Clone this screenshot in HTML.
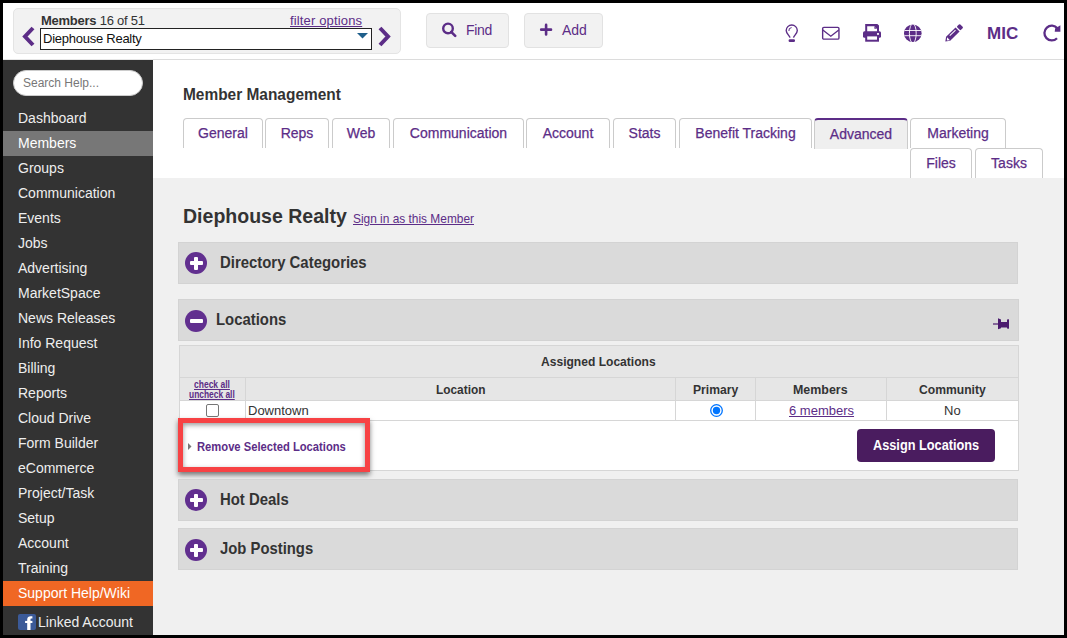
<!DOCTYPE html>
<html><head><meta charset="utf-8">
<style>
*{box-sizing:border-box;margin:0;padding:0}
html,body{width:1067px;height:638px;overflow:hidden;background:#000;font-family:"Liberation Sans",sans-serif}
.a{position:absolute}
#frame{position:absolute;left:3px;top:3px;width:1061px;height:632px;background:#fff;overflow:hidden}
.p{color:#5c2d87}
.t{white-space:nowrap;line-height:1}
.tab{position:absolute;top:118px;height:30px;border:1px solid #cbcbcb;border-bottom:none;border-radius:4px 4px 0 0;background:#fff;color:#5c2d87;font-size:14px;line-height:1;white-space:nowrap;text-align:center;padding-top:7px;-webkit-text-stroke:0.25px #5c2d87}
.tab.act{background:#efefef;border-top:2px solid #5c2d87;padding-top:7px;height:31px}
.panel{position:absolute;left:178px;width:841px;height:42px;background:#dadada;border:1px solid #d3d3d3}
.circ{position:absolute;left:185px;width:22px;height:22px;border-radius:50%;background:#612f8f}
.circ .h{position:absolute;left:4.5px;top:9px;width:13px;height:4px;background:#fff;border-radius:1px}
.circ .v{position:absolute;left:9px;top:4.5px;width:4px;height:13px;background:#fff;border-radius:1px}
.ptitle{position:absolute;left:220px;transform-origin:0 0;font-size:17px;font-weight:bold;color:#333;white-space:nowrap;line-height:1}
.th{font-size:13px;font-weight:bold;color:#333;transform-origin:0 0}
</style></head><body>
<div id="frame"></div>

<!-- header -->
<div class="a" style="left:153px;top:59px;width:911px;height:1px;background:#dcdcdc"></div>
<div class="a" style="left:3px;top:59px;width:150px;height:1px;background:#e6e6e6"></div>
<div class="a" style="left:13px;top:8px;width:388px;height:46px;background:#f2f2f2;border:1px solid #e4e4e4;border-radius:5px"></div>
<div class="a t" style="left:41px;top:14px;font-size:13px;color:#333;letter-spacing:-0.25px"><b>Members</b> 16 of 51</div>
<div class="a t p" style="left:290px;top:14px;font-size:13px;letter-spacing:0.15px;text-decoration:underline">filter options</div>
<div class="a" style="left:40px;top:28px;width:332px;height:22px;background:#fff;border:1px solid #222"></div>
<div class="a t" style="left:43px;top:32px;font-size:13px;color:#111;letter-spacing:-0.25px">Diephouse Realty</div>
<svg class="a" style="left:357px;top:33px" width="11" height="6" viewBox="0 0 11 6"><path d="M0 0H11L5.5 5.5Z" fill="#1f5f8b"/></svg>
<svg class="a" style="left:21px;top:26px" width="15" height="21" viewBox="0 0 15 21"><path d="M12 2L4 10.5L12 19" stroke="#5c2d87" stroke-width="4" fill="none"/></svg>
<svg class="a" style="left:377px;top:26px" width="15" height="21" viewBox="0 0 15 21"><path d="M3 2L11 10.5L3 19" stroke="#5c2d87" stroke-width="4" fill="none"/></svg>

<div class="a" style="left:426px;top:13px;width:83px;height:35px;background:#f2f2f2;border:1px solid #e2e2e2;border-radius:4px"></div>
<svg class="a" style="left:441px;top:22px" width="16" height="16" viewBox="0 0 16 16"><circle cx="7" cy="6.4" r="4.8" stroke="#5c2d87" stroke-width="2.4" fill="none"/><path d="M10.2 9.8L14.2 13.8" stroke="#5c2d87" stroke-width="2.6" stroke-linecap="round"/></svg>
<div class="a t p" style="left:466px;top:23px;font-size:14px;letter-spacing:-0.3px">Find</div>
<div class="a" style="left:524px;top:13px;width:79px;height:35px;background:#f2f2f2;border:1px solid #e2e2e2;border-radius:4px"></div>
<svg class="a" style="left:539px;top:23px" width="14" height="14" viewBox="0 0 14 14"><path d="M7.1 1.9V11.4M2.2 6.65H12" stroke="#5c2d87" stroke-width="2.6" stroke-linecap="round"/></svg>
<div class="a t p" style="left:562px;top:23px;font-size:14px">Add</div>

<!-- right icons -->
<svg class="a" style="left:784px;top:23px" width="16" height="20" viewBox="0 0 16 20"><path d="M6 14.7C5.6 12.4 2.2 10.6 2.2 7.55A5.55 5.55 0 0 1 13.3 7.55C13.3 10.6 9.9 12.4 9.5 14.7" stroke="#5c2d87" stroke-width="1.4" fill="none"/><rect x="4.6" y="16.2" width="6.4" height="2.8" rx="1.2" fill="#5c2d87"/><path d="M4.9 8A3 3 0 0 1 7.6 4.6" stroke="#5c2d87" stroke-width="1" fill="none"/></svg>
<svg class="a" style="left:821px;top:26px" width="20" height="15" viewBox="0 0 20 15"><rect x="1.65" y="1.35" width="16.3" height="11.8" rx="1.2" stroke="#5c2d87" stroke-width="1.4" fill="none"/><path d="M1.8 4L9.8 10.2L17.8 4" stroke="#5c2d87" stroke-width="1.4" fill="none"/></svg>
<svg class="a" style="left:863px;top:24px" width="18" height="18" viewBox="0 0 18 18"><path d="M2.2 0H14.4L16 1.6V8H2.2Z" fill="#5c2d87"/><path d="M4.2 2.2H11.4L14 4.8V8H4.2Z" fill="#fff"/><path d="M11.4 2.2V4.8H14" fill="#5c2d87"/><rect x="0" y="7.2" width="18" height="6.5" rx="1.5" fill="#5c2d87"/><rect x="2.2" y="11.5" width="13.8" height="6.2" fill="#5c2d87"/><rect x="4.2" y="12.4" width="9.8" height="3.3" fill="#fff"/><rect x="14" y="9.1" width="2" height="1.7" fill="#fff"/></svg>
<svg class="a" style="left:903px;top:24px" width="19" height="19" viewBox="0 0 19 19"><defs><clipPath id="gc"><circle cx="9.8" cy="9.3" r="8.8"/></clipPath></defs><circle cx="9.8" cy="9.3" r="8.8" fill="#5c2d87"/><g clip-path="url(#gc)" stroke="#fff" stroke-width="0.9" fill="none"><path d="M0 6.5H19M0 11.7H19"/><ellipse cx="9.8" cy="9.3" rx="3.4" ry="9.6"/></g></svg>
<svg class="a" style="left:943px;top:21px" width="23" height="23" viewBox="0 0 23 23"><g transform="translate(2.3 20.6) rotate(-44.5)"><path d="M0 0L4 -2.9H17.2V2.9H4Z" fill="#5c2d87"/><rect x="7.3" y="-1.6" width="8.1" height="1" fill="#fff"/><path d="M1.9 0.3L4.3 -1.8V2.2Z" fill="#fff"/><rect x="18.5" y="-2.65" width="4.2" height="5.3" rx="1" fill="#5c2d87"/></g></svg>
<div class="a t p" style="left:987px;top:25px;font-size:17px;font-weight:bold;letter-spacing:0">MIC</div>
<svg class="a" style="left:1042px;top:24px" width="20" height="19" viewBox="0 0 20 19"><path d="M15.4 4.3A7.35 7.35 0 1 0 15 14.2" stroke="#5c2d87" stroke-width="2.3" fill="none"/><path d="M13.1 4.6L18.4 1.3V7.8H12.7Z" fill="#5c2d87"/></svg>

<!-- sidebar -->
<div class="a" style="left:3px;top:60px;width:150px;height:575px;background:#333"></div>
<div class="a" style="left:13px;top:70px;width:130px;height:26px;background:#fff;border:1px solid #ccc;border-radius:13px"></div>
<div class="a t" style="left:23px;top:77px;font-size:12px;color:#777">Search Help...</div>
<div class="a" style="left:3px;top:131px;width:150px;height:25px;background:#777"></div>
<div class="a" style="left:3px;top:581px;width:150px;height:25px;background:#f06724"></div>
<div id="nav" class="a" style="left:18px;top:106px;font-size:14px;color:#eee;line-height:25px;white-space:nowrap">
Dashboard<br><span style="color:#fff">Members</span><br>Groups<br>Communication<br>Events<br>Jobs<br>Advertising<br>MarketSpace<br>News Releases<br>Info Request<br>Billing<br>Reports<br>Cloud Drive<br>Form Builder<br>eCommerce<br>Project/Task<br>Setup<br>Account<br>Training<br><span style="color:#fff">Support Help/Wiki</span>
</div>
<svg class="a" style="left:18px;top:614px" width="18" height="16" viewBox="0 0 18 16"><rect x="0" y="0" width="18" height="16" rx="2" fill="#3b5a98"/><path d="M9.2 16V5.5C9.2 3.2 10.6 2.2 12.6 2.2H14.4V4.6H13.3C12.7 4.6 12.5 5 12.5 5.6V16Z" fill="#fff"/><rect x="7.1" y="6.9" width="7.3" height="2.1" fill="#fff"/></svg>
<div class="a t" style="left:38px;top:615px;font-size:14px;color:#eee">Linked Account</div>

<!-- content -->
<div class="a" style="left:153px;top:178px;width:911px;height:457px;background:#f0f0f0"></div>
<div class="a t" style="left:183px;top:87px;font-size:16px;font-weight:bold;color:#333;transform:scaleX(0.965);transform-origin:0 0">Member Management</div>

<!-- tabs -->
<div class="tab" style="left:183px;width:80px">General</div>
<div class="tab" style="left:265px;width:64px">Reps</div>
<div class="tab" style="left:332px;width:58px">Web</div>
<div class="tab" style="left:393px;width:131px">Communication</div>
<div class="tab" style="left:526px;width:84px">Account</div>
<div class="tab" style="left:613px;width:63px">Stats</div>
<div class="tab" style="left:679px;width:133px">Benefit Tracking</div>
<div class="tab act" style="left:814px;width:94px">Advanced</div>
<div class="tab" style="left:910px;width:96px">Marketing</div>
<div class="tab" style="left:910px;top:148px;width:62px">Files</div>
<div class="tab" style="left:975px;top:148px;width:68px">Tasks</div>

<div class="a t" style="left:183px;top:205px;font-size:21px;font-weight:bold;color:#333;transform:scaleX(0.93);transform-origin:0 0">Diephouse Realty</div>
<div class="a t p" style="left:353px;top:212px;font-size:13px;transform:scaleX(0.915);transform-origin:0 0;text-decoration:underline">Sign in as this Member</div>

<!-- panels -->
<div class="panel" style="top:242px;width:840px"></div>
<div class="circ" style="top:252px"><div class="h"></div><div class="v"></div></div>
<div class="ptitle" style="top:254px;transform:scaleX(0.877)">Directory Categories</div>

<div class="panel" style="top:299px"></div>
<div class="circ" style="top:310px"><div class="h"></div></div>
<div class="ptitle" style="top:311px;left:216px;transform:scaleX(0.875)">Locations</div>
<svg class="a" style="left:993px;top:318px" width="17" height="12" viewBox="0 0 17 12"><path d="M0 6H5" stroke="#4b1a6e" stroke-width="1.2"/><path d="M5 0.3L8 1.6V4H14V1.6L16 1.3V10.7L14 10.4V9.6H8V10.2L5 11.3Z" fill="#4b1a6e"/></svg>

<!-- table -->
<div class="a" style="left:179px;top:345px;width:840px;height:126px;border:1px solid #d6d6d6;background:#fff"></div>
<div class="a" style="left:180px;top:346px;width:838px;height:54px;background:#e6e6e6"></div>
<div class="a" style="left:180px;top:377px;width:838px;height:1px;background:#d6d6d6"></div>
<div class="a" style="left:180px;top:400px;width:838px;height:1px;background:#d6d6d6"></div>
<div class="a" style="left:180px;top:420px;width:838px;height:1px;background:#d6d6d6"></div>
<div class="a" style="left:245px;top:378px;width:1px;height:42px;background:#d6d6d6"></div>
<div class="a" style="left:675px;top:378px;width:1px;height:42px;background:#d6d6d6"></div>
<div class="a" style="left:755px;top:378px;width:1px;height:42px;background:#d6d6d6"></div>
<div class="a" style="left:886px;top:378px;width:1px;height:42px;background:#d6d6d6"></div>

<div class="a t th" style="left:541px;top:355px;transform:scaleX(0.928)">Assigned Locations</div>
<div class="a t th" style="left:436px;top:383px;transform:scaleX(0.913)">Location</div>
<div class="a t th" style="left:693px;top:383px;transform:scaleX(0.934)">Primary</div>
<div class="a t th" style="left:793px;top:383px;transform:scaleX(0.956)">Members</div>
<div class="a t th" style="left:919px;top:383px;transform:scaleX(0.933)">Community</div>
<div class="a t p" style="left:194px;top:380px;font-size:10px;font-weight:bold;transform:scaleX(0.85);transform-origin:0 0;text-decoration:underline">check all</div>
<div class="a t p" style="left:189px;top:390px;font-size:10px;font-weight:bold;transform:scaleX(0.84);transform-origin:0 0;text-decoration:underline">uncheck all</div>
<div class="a" style="left:206px;top:404px;width:13px;height:13px;border:1px solid #767676;border-radius:2px;background:#fff"></div>
<div class="a t" style="left:248px;top:404px;font-size:13px;color:#333">Downtown</div>
<svg class="a" style="left:710px;top:404px" width="13" height="13" viewBox="0 0 13 13"><circle cx="6.5" cy="6.5" r="5.8" stroke="#0075ff" stroke-width="1.3" fill="#fff"/><circle cx="6.5" cy="6.5" r="3.7" fill="#0075ff"/></svg>
<div class="a t p" style="left:789px;top:404px;font-size:13px;text-decoration:underline">6 members</div>
<div class="a t" style="left:944px;top:404px;font-size:13px;color:#333">No</div>

<svg class="a" style="left:188px;top:443px" width="4" height="7" viewBox="0 0 4 7"><path d="M0 0L3.5 3.5L0 7Z" fill="#777"/></svg>
<div class="a t p" style="left:197px;top:440px;font-size:13px;font-weight:bold;transform:scaleX(0.862);transform-origin:0 0">Remove Selected Locations</div>
<div class="a" style="left:857px;top:429px;width:138px;height:33px;background:#4a1c5f;border-radius:4px"></div>
<div class="a t" style="left:873px;top:438px;font-size:14px;font-weight:bold;color:#fff;transform:scaleX(0.91);transform-origin:0 0">Assign Locations</div>

<!-- red highlight -->
<div class="a" style="left:178px;top:418px;width:192px;height:54px;border:5px solid #f74244;box-shadow:0 3px 5px rgba(0,0,0,.5), inset 0 2px 5px rgba(0,0,0,.4)"></div>

<div class="panel" style="top:479px;width:840px"></div>
<div class="circ" style="top:489px"><div class="h"></div><div class="v"></div></div>
<div class="ptitle" style="top:491px;transform:scaleX(0.877)">Hot Deals</div>

<div class="panel" style="top:528px;width:840px"></div>
<div class="circ" style="top:539px"><div class="h"></div><div class="v"></div></div>
<div class="ptitle" style="top:540px;transform:scaleX(0.873)">Job Postings</div>
</body></html>
